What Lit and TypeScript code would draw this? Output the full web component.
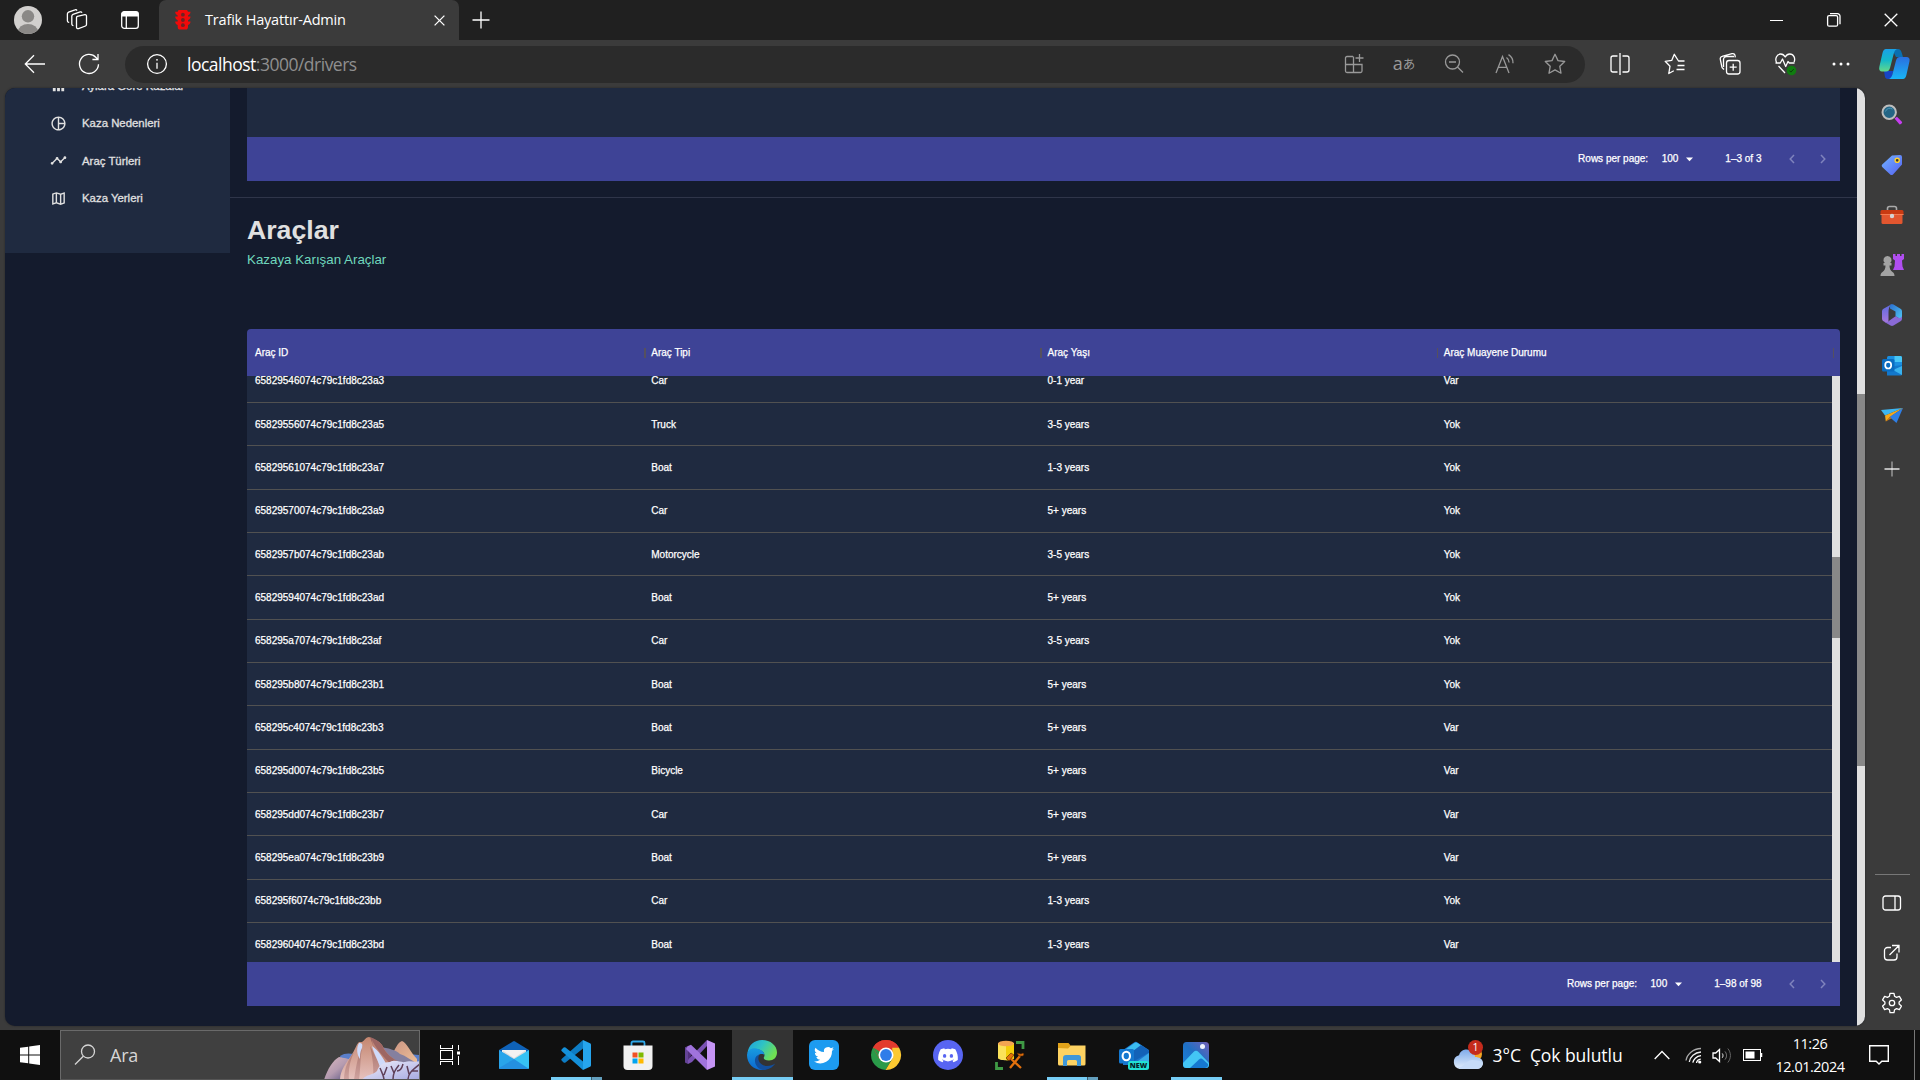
import { LitElement, html, svg, css, TemplateResult } from "lit";
import { customElement, property } from "lit/decorators.js";

/* ---------- shared icon helper ---------- */
const ico = (w: number, h: number, body: unknown, cls = "") =>
  html`<svg class="ico ${cls}" width=${w} height=${h} viewBox="0 0 ${w} ${h}">${body}</svg>`;

/* ---------- title bar and toolbar ---------- */
const avatar = ico(28, 28, svg`
  <clipPath id="av"><circle cx="14" cy="14" r="14"/></clipPath>
  <g clip-path="url(#av)"><rect width="28" height="28" fill="#d2d0ce"/>
  <circle cx="14" cy="10.3" r="6.2" fill="#8a8886"/><ellipse cx="14" cy="25.6" rx="10" ry="7.6" fill="#8a8886"/></g>`);
const workspaces = ico(22, 22, svg`<g class="ln">
  <path d="M11.3 7.4l7.6-1.7a1.3 1.3 0 0 1 1.6 1.3v8.6a1.5 1.5 0 0 1-1 1.4l-7 2.6a1.5 1.5 0 0 1-2-1.4V8.8a1.5 1.5 0 0 1 .8-1.4z"/>
  <path d="M7.4 16.6l-.7-.2a1.6 1.6 0 0 1-.9-1.4V7a2 2 0 0 1 1.2-1.7l7.2-2.4a1.5 1.5 0 0 1 1.8.8"/>
  <path d="M3.2 13.5l-.9-.3a1.6 1.6 0 0 1-.9-1.4V4.9a2 2 0 0 1 1.2-1.7L9 .9a1.5 1.5 0 0 1 2 .7"/></g>`);
const tabActions = ico(18, 18, svg`<rect x=".7" y=".7" width="16.6" height="16.6" rx="2.6" class="ln"/>
  <path d="M.5 5.6V3A2.5 2.5 0 0 1 3 .5h12A2.5 2.5 0 0 1 17.500 3v2.600z" fill="#fff"/><path d="M5.300 5v12.500" class="ln"/>`);
const favicon = ico(16, 20, svg`<path fill="#f00a0a" d="M3.500 0h8.600l.9 1.800h2.500c0 1.900-.9 3.100-2.500 3.600v1.200h2.500c0 1.900-.9 3.100-2.500 3.600v1.300h2.500c0 1.900-.9 3.100-2.500 3.600V17c0 1.600-.9 2.600-2.300 2.600H5C3.600 19.600 2.700 18.600 2.700 17v-1.900C1.100 14.600.2 13.400.2 11.500h2.500v-1.300C1.100 9.700.2 8.500.2 6.600h2.500V5.400C1.100 4.900.2 3.700.2 1.800h2.500z"/>
  <g fill="#6d2323"><circle cx="7.900" cy="4.700" r="1.900"/><circle cx="7.900" cy="10" r="1.900"/><circle cx="7.900" cy="15.200" r="1.900"/></g>`);
const closeTab = ico(11, 11, svg`<path class="ln" d="M.6.6l9.800 9.800M10.400.6L.6 10.400"/>`);
const plus = ico(18, 18, svg`<path class="ln" d="M9 .5v17M.5 9h17"/>`);
const winMin = ico(13, 13, svg`<path class="ln crisp" d="M0 6.500h13"/>`);
const winMax = ico(14, 14, svg`<rect class="ln" x=".6" y="2.600" width="10" height="10.600" rx="1.500"/><path class="ln" d="M3 .7h7.500a2.500 2.500 0 0 1 2.500 2.500v8"/>`);
const winClose = ico(14, 14, svg`<path class="ln" d="M.7.7l12.600 12.600M13.300.7L.7 13.300"/>`);
const back = ico(22, 20, svg`<path class="ln" stroke-width="1.400" d="M21 10H1.500M10 1.300L1.300 10l8.700 8.700"/>`);
const reload = ico(22, 22, svg`<path class="ln" d="M20.500 11.300A9.500 9.500 0 1 1 18 4.500l1.800 1.900M20 1v5.500h-5.600"/>`);
const info = ico(22, 22, svg`<circle class="ln" cx="11" cy="11" r="9.400"/><path class="ln" d="M11 9.700v6"/><circle cx="11" cy="6.800" r=".9" fill="#fff"/>`);

const dim: TemplateResult[] = [
  ico(20, 20, svg`<path class="ln" d="M9 2.500H3A1.500 1.500 0 0 0 1.500 4v13A1.500 1.500 0 0 0 3 18.500h13.500A1.500 1.500 0 0 0 18 17v-6.500H1.500M9.500 2.500v16M15.500 0v8M11.500 4h8"/>`),
  html`<span class="aa">a<i>あ</i></span>`,
  ico(20, 20, svg`<circle class="ln" cx="8.500" cy="8" r="7"/><path class="ln" d="M13.500 13l5.500 5.500M5 8h7"/>`),
  ico(20, 20, svg`<path class="ln" d="M1 19L7.500 2.500 14 19M3.300 13.300h8.400M11.500 3.500c1.700 1.200 2.600 3 2.600 5M13.500.6c3 1.800 4.600 5 4.500 8.600"/>`),
  ico(22, 22, svg`<path class="ln" d="M11 1.300l3 6.300 6.700.9-4.900 4.800 1.200 6.900-6-3.300-6 3.300 1.200-6.900L1.300 8.500 8 7.600z" stroke-linejoin="round"/>`),
];
const bright: TemplateResult[] = [
  ico(20, 22, svg`<path class="ln" d="M7.500 3H3A2 2 0 0 0 1 5v12a2 2 0 0 0 2 2h4.500M12.500 3H17a2 2 0 0 1 2 2v12a2 2 0 0 1-2 2h-4.500M10 0v22"/>`),
  ico(22, 22, svg`<path class="ln" stroke-linejoin="round" d="M20.500 8h-6L10.300 1.300 7.700 7.400l-6.500.9L6 13.200 4.800 20.500l5-2.700M13.500 12.500h7M12.500 16.500h8"/>`),
  ico(22, 24, svg`<rect class="ln" x="7.500" y="8.500" width="13.500" height="13.500" rx="2.500"/><path class="ln" d="M14.200 11.700v7M10.700 15.200h7M5 17.500L3.500 16a3 3 0 0 1-.6-1L1.300 7.300a2.400 2.400 0 0 1 1.800-2.900L13 1.700a2.400 2.400 0 0 1 3 1.700l.3 2M4.500 15V7.500a3 3 0 0 1 3-3H15"/>`),
  ico(24, 24, svg`<path class="ln" stroke-linejoin="round" d="M2.500 10.500C.8 7 2.500 2 6.600 2c2.100 0 3.600 1.200 4.600 3 1-1.800 2.500-3 4.600-3 4 0 5.800 4.400 4.300 8M1.500 11h4.800l2.200-4 3.200 7.500L14 9.500l1.300 1.500h5.200M4.500 14l6.500 7"/><circle cx="17.500" cy="18.500" r="4.800" fill="#107c10"/><path d="M15.400 18.600l1.500 1.500 2.800-3" fill="none" stroke="#0b3d0b"/>`),
  ico(18, 4, svg`<g fill="#fff"><circle cx="2" cy="2" r="1.500"/><circle cx="9" cy="2" r="1.500"/><circle cx="16" cy="2" r="1.500"/></g>`),
];
const copilot = ico(31, 30, svg`
  <defs><linearGradient id="cpa" x1="0" y1="0" x2="0" y2="1"><stop offset="0" stop-color="#1aa0e8"/><stop offset=".5" stop-color="#14b8c9"/><stop offset="1" stop-color="#63d98a"/></linearGradient>
  <linearGradient id="cpb" x1="0" y1="0" x2="0" y2="1"><stop offset="0" stop-color="#2a6fe0"/><stop offset="1" stop-color="#19b5f5"/></linearGradient></defs>
  <path d="M13 0h6c2 0 3 1.500 3.600 3.500L24 8h-7z" fill="#0a6fb0"/>
  <path d="M9 30c-2 0-3-1-3.200-3L5 22h9l-1 8z" fill="#1746c4"/>
  <path d="M7 0h11c-1.800.8-2.600 2.300-3.200 4.500L11 19c-.7 2.400-1.900 3.500-4 3.500H3C.8 22.500-.3 20.800.3 18L3.500 4C4.200 1.300 5.300 0 7 0z" fill="url(#cpa)"/>
  <path d="M24 30H10c1.800-.8 2.800-2.300 3.400-4.500L17 11.500C17.700 9 19 8 21 8h6.500c2.400 0 3.600 1.600 3 4.300L27.400 26C26.700 28.700 25.700 30 24 30z" fill="url(#cpb)"/>`);

/* ---------- side strip ---------- */
const strip: TemplateResult[] = [
  ico(22, 22, svg`<path d="M13.500 14.500l2.500-1.700 4.900 5c1 1-1.400 3.300-2.500 2.400z" fill="#c63df0"/><circle cx="8.200" cy="8.200" r="6.700" fill="#246585" stroke="#bdbdbd" stroke-width="2"/><path d="M4.500 7.500a4.500 4.500 0 0 1 7-2.400" stroke="#4d98b8" fill="none"/>`),
  ico(22, 22, svg`<defs><linearGradient id="tg" x1="0" y1="0" x2="1" y2="1"><stop offset="0" stop-color="#72b5ff"/><stop offset="1" stop-color="#5560f2"/></linearGradient></defs><path d="M11 1.500L19 1a2 2 0 0 1 2 2v7.500L12 20.400a2 2 0 0 1-2.800 0L1.200 13a2 2 0 0 1 0-2.600z" fill="url(#tg)"/><circle cx="16.200" cy="6.300" r="2.100" fill="#3a3a2c" stroke="#ffd02f" stroke-width="1.400"/>`),
  ico(24, 20, svg`<path d="M7.500 5V3.500a2 2 0 0 1 2-2h5a2 2 0 0 1 2 2V5" stroke="#aaa" stroke-width="1.600" fill="none"/><rect x="1.500" y="8" width="21" height="11" rx="1.500" fill="#e2562f"/><path d="M2 5h20a1.500 1.500 0 0 1 1.500 1.500V10H.5V6.500A1.500 1.500 0 0 1 2 5z" fill="#c93a12"/><path d="M.5 9.500h23" stroke="#f47b50"/><circle cx="12" cy="11" r="2.200" fill="#d4d4d4"/>`),
  ico(24, 24, svg`<path d="M13 1h2.500v2H17V1h3v2h1.500V1H24v5l-2 1.500.5 6 1.500 3.500H13l1.500-3.500.5-6L13 6z" fill="#b04ef0"/><path d="M7.500 3a4 4 0 0 1 2.700 7h1.300v2.500h-2c0 3 .8 5 3 6.500 1.500 1 2 2 2 4H.5c0-2 .5-3 2-4 2.200-1.500 3-3.500 3-6.500h-2V10h1.300A4 4 0 0 1 7.500 3z" fill="#a3a3a3"/>`),
  ico(22, 24, svg`<defs><linearGradient id="m1" x1="0" y1="0" x2="0" y2="1"><stop offset="0" stop-color="#5a6be0"/><stop offset="1" stop-color="#a877dc"/></linearGradient><linearGradient id="m2" x1="0" y1="0" x2="1" y2="1"><stop offset="0" stop-color="#2b6fd0"/><stop offset="1" stop-color="#4fc6f2"/></linearGradient></defs>
   <path d="M11 1L2.500 5.700A3 3 0 0 0 1 8.300v7.400a3 3 0 0 0 1.500 2.600L5 19.500c2 .5 2.500-.5 2.500-2V9.500C7.500 6 8 3 11 1z" fill="url(#m1)"/><path d="M9.500 1.600c1-.6 2-.6 3 0l7 4.100A3 3 0 0 1 21 8.300v6c0 1.500-1 2-2.500 1.200l-4-2.300V8.600L9 5.500c0-2 0-3.100.5-3.900z" fill="url(#m2)"/><path d="M21 13v2.700a3 3 0 0 1-1.500 2.600l-7 4.200c-1 .6-2 .6-3 0L3.500 19c2.500.4 4-.7 5-1.600L14.500 13.200l3 1.500c1.500.6 3 0 3.500-1.700z" fill="#8a6ad6"/>`),
  ico(22, 22, svg`<rect x="6" y="1" width="15" height="18" rx="1.500" fill="#1b8fe0"/><path d="M13.500 1H19.500A1.500 1.500 0 0 1 21 2.500V7h-7.500z" fill="#47c6f5"/><path d="M6 12l15-2v9a1.500 1.500 0 0 1-1.500 1.500H6z" fill="#1378cc"/><path d="M21 11v9L12 15z" fill="#39b3ef"/><rect x="1" y="4" width="12.500" height="12.500" rx="1.500" fill="#0a6cc0"/><ellipse cx="7.200" cy="10.200" rx="3" ry="3.300" fill="none" stroke="#fff" stroke-width="1.700"/>`),
  ico(24, 18, svg`<path d="M1 3l22-2L5 8.500z" fill="#3db6f2"/><path d="M23 1L5 8.500l.8 6L10 10z" fill="#f5a81c"/><path d="M23 1L9.500 10l7 6z" fill="#2f7fe6"/><path d="M5.800 14.500L10 10l1.500 1.300z" fill="#d7780a"/>`),
  ico(16, 16, svg`<path d="M8 .5v15" stroke="#999" stroke-width="1.500"/><path d="M.5 8h15" class="ln"/>`),
];
const stripLow: TemplateResult[] = [
  ico(20, 16, svg`<rect class="ln" x="1" y="1" width="17.500" height="14" rx="2.500"/><path class="ln" d="M13 1v14"/>`),
  ico(18, 18, svg`<path class="ln" d="M8 3.500H4.500A3 3 0 0 0 1.500 6.500V13a3 3 0 0 0 3 3H11a3 3 0 0 0 3-3V9.500M9 1.500h7V8.500M16 1.500L6.500 11"/>`),
  ico(22, 22, svg`<path class="ln" stroke-linejoin="round" d="M9 1.300h4l.6 3 1.900 1.100 2.900-1 2 3.500-2.300 2v2.200l2.300 2-2 3.500-2.900-1-1.900 1.100-.6 3H9l-.6-3-1.900-1.100-2.900 1-2-3.500 2.300-2V9.900l-2.300-2 2-3.500 2.900 1 1.900-1.100z"/><circle class="ln" cx="11" cy="11" r="2.700"/>`),
];

/* ---------- sidebar icons (24-unit grid) ---------- */
const mi = (d: string) => html`<svg class="mi" width="17" height="17" viewBox="0 0 24 24"><path d=${d}/></svg>`;
const menu = [
  { t: "Aylara Göre Kazalar", i: mi("M4 9h4v11H4zM10 4h4v16h-4zM16 13h4v7h-4z") },
  { t: "Kaza Nedenleri", i: mi("M12 2C6.480 2 2 6.480 2 12s4.480 10 10 10 10-4.480 10-10S17.520 2 12 2zm1 2.070c3.610.45 6.480 3.330 6.930 6.930H13V4.070zM4 12c0-4.060 3.070-7.440 7-7.930v15.870c-3.930-.5-7-3.880-7-7.940zm9 7.930V13h6.930c-.45 3.610-3.320 6.480-6.930 6.930z") },
  { t: "Araç Türleri", i: mi("M23 8c0 1.100-.9 2-2 2-.18 0-.35-.02-.51-.07l-3.560 3.550c.05.16.07.34.07.52 0 1.100-.9 2-2 2s-2-.9-2-2c0-.18.02-.36.07-.52l-2.550-2.550c-.16.05-.34.07-.52.07s-.36-.02-.52-.07l-4.550 4.560c.05.16.07.33.07.51 0 1.100-.9 2-2 2s-2-.9-2-2 .9-2 2-2c.18 0 .35.02.51.07l4.560-4.550C8.020 9.360 8 9.180 8 9c0-1.100.9-2 2-2s2 .9 2 2c0 .18-.02.36-.07.52l2.550 2.550c.16-.05.34-.07.52-.07s.36.02.52.07l3.550-3.560C19.020 8.350 19 8.180 19 8c0-1.100.9-2 2-2s2 .9 2 2z") },
  { t: "Kaza Yerleri", i: mi("M20.500 3l-.16.03L15 5.100 9 3 3.360 4.900c-.21.07-.36.25-.36.48V20.500c0 .28.22.5.5.5l.16-.03L9 18.900l6 2.100 5.640-1.900c.21-.07.36-.25.36-.48V3.500c0-.28-.22-.5-.5-.5zM10 5.470l4 1.400v11.660l-4-1.400V5.470zm-5 .99l3-1.010v11.700l-3 1.160V6.460zm14 11.080l-3 1.010V6.860l3-1.160v11.840z") },
];

/* ---------- taskbar icons ---------- */
const startLogo = ico(20, 20, svg`<path fill="#fff" d="M0 2.800L8.200 1.700v7.800H0zM9.200 1.500L20 0v9.500H9.200zM0 10.500h8.200v7.800L0 17.200zM9.200 10.500H20V20L9.200 18.500z"/>`);
const searchGlass = ico(22, 22, svg`<circle class="ln" stroke-width="1.600" cx="14" cy="7.500" r="6.500"/><path class="ln" stroke-width="1.600" d="M9.300 12.200L1 20.500"/>`);
const mountains = ico(96, 43, svg`
  <defs><linearGradient id="mt" x1="0" y1="0" x2="0" y2="1"><stop offset="0" stop-color="#c4866f"/><stop offset="1" stop-color="#e6c2bf"/></linearGradient>
  <linearGradient id="mv" x1="0" y1="0" x2="0" y2="1"><stop offset="0" stop-color="#a87066"/><stop offset="1" stop-color="#cfa3a0"/></linearGradient>
  <linearGradient id="ml" x1="0" y1="0" x2="1" y2="1"><stop offset="0" stop-color="#dcb9c0"/><stop offset=".5" stop-color="#b59bb0"/><stop offset="1" stop-color="#4d4a7c"/></linearGradient>
  <linearGradient id="mr" x1="0" y1="0" x2="1" y2="1"><stop offset="0" stop-color="#c79282"/><stop offset="1" stop-color="#f3c49a"/></linearGradient>
  <linearGradient id="ms" x1="0" y1="0" x2="1" y2="1"><stop offset="0" stop-color="#f1f1fd"/><stop offset="1" stop-color="#a6a9e0"/></linearGradient></defs>
  <path d="M16 19c4-3 9-3 14-2v14H20zM74 17h10l12 1v14H74z" fill="#5b7fcb"/>
  <path d="M0 43c3-10 9-20 15-23 5 1 9 1 13 4l-5 19z" fill="url(#ml)"/>
  <path d="M68 18c3-6 6-13 10-14 5 2 9 12 15 18v10H66z" fill="url(#mr)"/>
  <path d="M56 10c8 1 16 3 20 7 6 2 11 6 16 9v8H56z" fill="#85809f"/>
  <path d="M16 43c0-9 6-17 11-24 4-6 5-11 8-14h3c3-2 4-5 7-5 5 2 10 4 13 8 4 9 9 12 20 20l-10 15z" fill="url(#mt)"/>
  <path d="M46 0c5 2 9 4 12 8 4 9 10 13 20 19l-11 1C56 22 49 11 46 0z" fill="#9d6663"/>
  <path d="M48 3c3 7 10 16 20 25l-4 1C55 22 49 13 48 3z" fill="#c08677"/>
  <path d="M30 15c-4 9-6 18-5 28h-5c0-11 4-20 10-28zM39 7c-3 9-2 22-4 36h-5c2-13 4-26 9-36zM46 9c5 9 9 18 12 23l-9 7c1-10-1-21-3-30z" fill="url(#mv)"/>
  <path d="M35 6c3 0 4 1 3 5-2 4-2 7-2 11-3-4-4-11-1-16zM48 9c7 5 11 12 15 19l-6 5C54 23 50 17 48 9z" fill="#cfdafa"/>
  <path d="M38 43c4-6 10-4 15-9 2-6 7-9 13-9 6-3 11 1 15 0 5-2 10 1 15-1v19z" fill="url(#ms)"/>
  <path d="M60 43c0-4-2-7-4-12M60 38l3-8M69 43c0-7 2-10 6-15M70 36l-3-7M73 34c3 0 5-3 6-7M84 43c0-6 3-9 12-16M85 37l-2-8M88 34h6" stroke="#5f4059" stroke-width="1.500" fill="none"/>`);
const taskView = ico(21, 20, svg`<g class="crisp" fill="none" stroke="#fff"><path d="M.5 0v3.500h12V0M.5 20v-3.500h12V20"/><rect x=".5" y="5.500" width="12" height="8.500"/><path d="M18.500 0v5M18.500 11v9"/></g><rect x="17" y="6.500" width="3" height="3" fill="#fff"/>`);

interface App { i: TemplateResult; active?: boolean; bar?: "full" | "split" | "wide" }
const apps: App[] = [
  { i: ico(30, 30, svg`<path d="M0 10L14 1.400a2 2 0 0 1 2 0L30 10v8H0z" fill="#0f62b8"/><path d="M3 10h24v12H3z" fill="#f2f2f2"/><path d="M3 10l12 8 12-8v4l-9 6H9z" fill="#dcdcdc"/><path d="M0 10l15 9v10H1a1 1 0 0 1-1-1z" fill="#29a4ea"/><path d="M30 10v18a1 1 0 0 1-1 1H1L15 19z" fill="#36c2f3"/><path d="M0 28l15-9 15 10H1z" fill="#2490e0"/>`) },
  { bar: "split", i: ico(30, 30, svg`<path d="M22 0l7 3.300a1.500 1.500 0 0 1 1 1.400V25.300a1.500 1.500 0 0 1-1 1.400L22 30z" fill="#26a5ee"/><path d="M22 0v8.500L4.500 22.400a1.500 1.500 0 0 1-1.900 0L.8 20.800a1.300 1.300 0 0 1 0-2z" fill="#0d7cc4"/><path d="M22 30v-8.500L4.500 7.600a1.500 1.500 0 0 0-1.900 0L.8 9.200a1.300 1.300 0 0 0 0 2z" fill="#1490da"/>`) },
  { i: ico(30, 30, svg`<path d="M8.500 8V3a1.500 1.500 0 0 1 1.500-1.500h10A1.500 1.500 0 0 1 21.500 3v5" fill="none" stroke="#2fa8e8" stroke-width="1.800"/><path d="M.5 5.500h29V26a4 4 0 0 1-4 4h-21a4 4 0 0 1-4-4z" fill="#f1f1f1"/><path d="M9.500 12.500h5v5h-5z" fill="#f25022"/><path d="M15.500 12.500h5v5h-5z" fill="#7fba00"/><path d="M9.500 18.500h5v5h-5z" fill="#00a4ef"/><path d="M15.500 18.500h5v5h-5z" fill="#ffb900"/>`) },
  { i: ico(30, 30, svg`<path d="M0 7.500l3-1.300 6 4.800-6 9.500V9.500L0 22.500z" fill="#52307c"/><path d="M0 7.500l3-1.500v18l-3-1.500z" fill="#644396"/><path d="M3 24l4-2L22 6V0L3 19.500z" fill="#7a52b3"/><path d="M3 6l3-1.300L22 20v10L1 9z" fill="#a073dc"/><path d="M22 0l8 3.500v23L22 30z" fill="#c594f5"/>`) },
  { active: true, bar: "full", i: ico(30, 30, svg`<defs><linearGradient id="ed" x1="0" y1="0" x2="1" y2=".5"><stop offset="0" stop-color="#1c9fe0"/><stop offset=".5" stop-color="#2fc3c4"/><stop offset="1" stop-color="#6fe052"/></linearGradient><linearGradient id="ee" x1="0" y1="0" x2="0" y2="1"><stop offset="0" stop-color="#189bdf"/><stop offset="1" stop-color="#0c68d0"/></linearGradient></defs>
    <path d="M.5 13C1.500 5 7.500 0 15 0c8.500 0 15 5.500 15 12.500 0 5-3.500 8-8 8-4 0-6-1.500-5-3.500 1-1.600.5-4-1.500-5.500C11 8 4 9 .5 13z" fill="url(#ed)"/><path d="M15 30C6.500 30 0 23.500 0 15 .5 9.500 5 7.500 9.500 8.500c4 .6 7.500 3 7.800 6C11 12 8.500 18 11 22.500c2 4 6 6 8.500 6.500-1.500.7-3 1-4.500 1z" fill="url(#ee)"/><path d="M12.500 14.500C9 20 14 26 20 26c3.500 0 6-1.300 8.200-2.500C25.500 27.700 21 30 16 30 10.500 29 7.500 24 8 19.500c.3-2.500 2-4.500 4.500-5z" fill="#124f9d"/>`) },
  { i: ico(30, 30, svg`<rect width="30" height="30" rx="6" fill="#1d9bf0"/><path d="M25 8.800a8 8 0 0 1-2.300.6 4 4 0 0 0 1.800-2.200 8 8 0 0 1-2.600 1A4.100 4.100 0 0 0 15 12a11.700 11.700 0 0 1-8.500-4.300 4.100 4.100 0 0 0 1.300 5.500 4 4 0 0 1-1.900-.5c0 2 1.400 3.700 3.300 4.100a4 4 0 0 1-1.900.1c.5 1.600 2 2.800 3.900 2.800A8.300 8.300 0 0 1 5 21.400 11.700 11.700 0 0 0 23 11z" fill="#fff"/>`) },
  { i: ico(30, 30, svg`<path d="M15 15L2 7.500A15 15 0 0 1 28 7.500z" fill="#e33b2e"/><path d="M2 7.500A15 15 0 0 0 14.500 30l7-11.500L15 15z" fill="#2a9a49"/><path d="M28 7.500A15 15 0 0 1 14.500 30L21.500 18.500 21.200 7.500z" fill="#fcc931"/><path d="M2 7.500A15 15 0 0 1 28 7.500H15l-7 11z" fill="#e33b2e"/><path d="M2 7.500L8.500 18.700 15 15z" fill="#2a9a49"/><circle cx="15" cy="15" r="7.500" fill="#fff"/><circle cx="15" cy="15" r="5.900" fill="#2f7de9"/>`) },
  { i: ico(30, 30, svg`<circle cx="15" cy="15" r="15" fill="#5865f2"/><path d="M22.300 9.300a14 14 0 0 0-3.600-1.100l-.5 1a13 13 0 0 0-6.400 0l-.5-1a14 14 0 0 0-3.600 1.100C5.500 13 4.900 16.600 5.200 20a14 14 0 0 0 4.400 2.200l1-1.600-1.500-.7.4-.3a10 10 0 0 0 11 0l.4.3-1.500.7 1 1.600a14 14 0 0 0 4.400-2.200c.4-4-.6-7.500-2.500-10.700z" fill="#fff"/><ellipse cx="11.600" cy="15.900" rx="1.700" ry="1.900" fill="#5865f2"/><ellipse cx="18.400" cy="15.900" rx="1.700" ry="1.900" fill="#5865f2"/>`) },
  { i: ico(30, 30, svg`<path d="M3 3v15c0 3 16 3 16 0V3z" fill="#fbe25a"/><path d="M11 4h8v14c0 1.500-4 2.200-8 2.200z" fill="#f3cd0a"/><ellipse cx="11" cy="3.500" rx="8" ry="2.800" fill="#f3a552"/><path d="M21 2.500h7V9M1.500 22v6.500H8" fill="none" stroke="#3f9a45" stroke-width="2.800"/><path d="M15 28l10-12M14 17l12 11" stroke="#e2700c" stroke-width="2.300"/><path d="M11 18l5-5 3 2-5 6zM22 13l2 3 4 0 1-2-1-1-2 1z" fill="#e2700c" stroke="#502400" stroke-width=".6"/>`) },
  { bar: "split", i: ico(30, 30, svg`<path d="M1 3h10.500l2.500 3H28v8H1z" fill="#e0a21a"/><path d="M1 8l10 .500 3-3h14.500V24a1.500 1.500 0 0 1-1.500 1.500H2.500A1.500 1.500 0 0 1 1 24z" fill="#fdd262"/><path d="M6 26v-8a3 3 0 0 1 3-3h12.500a2.500 2.500 0 0 1 2.500 2.500V26h-4v-4.500a1.500 1.500 0 0 0-1.500-1.500h-7a1.500 1.500 0 0 0-1.500 1.500V26z" fill="#3f97d8"/>`) },
  { i: ico(30, 30, svg`<path d="M4 10L15 2.500a3 3 0 0 1 3.500 0L30 10v15H4z" fill="#1b74cc"/><path d="M7 9l8.500-6a3 3 0 0 1 3 0L23 6 8 15z" fill="#3bbcf0"/><path d="M22 5l8 5.500v2L10 24V14z" fill="#1362b8"/><path d="M30 13v13H12z" fill="#39a9e8"/><rect x="0" y="9" width="15" height="14.500" rx="1.500" fill="#1478d0"/><ellipse cx="7.300" cy="16" rx="3.700" ry="4.200" fill="none" stroke="#fff" stroke-width="2.100"/><rect x="9" y="21" width="21" height="9" rx="2.500" fill="#22e0d4"/><text x="19.500" y="28.300" text-anchor="middle" class="new">NEW</text>`) },
  { bar: "wide", i: ico(30, 30, svg`<defs><linearGradient id="ph" x1="0" y1="1" x2="1" y2="0"><stop offset="0" stop-color="#1a82dc"/><stop offset=".5" stop-color="#1f70c4"/><stop offset="1" stop-color="#7360b8"/></linearGradient></defs><rect x="2" y="2" width="26" height="26" rx="3.500" fill="url(#ph)"/><path d="M2 23L12.500 12a3.500 3.500 0 0 1 5 0L28 23v1.500a3.500 3.500 0 0 1-3.500 3.500h-19A3.500 3.500 0 0 1 2 24.500z" fill="#43c6f5"/><path d="M9 28l9-8.500a3 3 0 0 1 4 0l5 4.500a3.500 3.500 0 0 1-3 4z" fill="#1678d0"/><circle cx="21.500" cy="6.500" r="2.500" fill="#f0f4ff"/>`) },
];
const weather = ico(30, 30, svg`<defs><linearGradient id="cl" x1="0" y1="0" x2="0" y2="1"><stop offset="0" stop-color="#7fabea"/><stop offset="1" stop-color="#e3eefc"/></linearGradient></defs><circle cx="22" cy="14" r="7" fill="#f5a623"/><path d="M7 29a7 7 0 0 1-1-13.700A8 8 0 0 1 20 12.500c1.500 1.500 2 3 2 4.500 4 0 8 2 8 6a6 6 0 0 1-6 6z" fill="url(#cl)"/><path d="M4 27c6 2 8-6 15-7 5 0 9 1 11 3a6 6 0 0 1-6 6H7z" fill="#c6dbf8"/>`);
const trayUp = ico(16, 10, svg`<path class="ln" stroke-width="1.500" d="M.7 9L8 1.500 15.300 9"/>`);
const wifi = ico(17, 17, svg`<g fill="none" stroke-width="1.300"><path d="M1 13.500C2 7 8 1.700 16 1.500" stroke="#aaa"/><path d="M4.300 15C5 10 9.500 5.500 16 5" stroke="#eee"/><path d="M7.800 15.700C8.300 12.500 11.300 9.200 16 8.700M11.500 16c.3-1.700 2-3.600 4.300-3.800" stroke="#fff"/></g><circle cx="14.700" cy="15" r="1.600" fill="#fff"/>`);
const sound = ico(21, 17, svg`<path class="ln" d="M1 6h2.700L7.500 2.500v12L3.700 11H1z"/><path d="M10.300 6.500c.9 1.200.9 3 0 4.200" stroke="#fff" fill="none"/><path d="M13 4.500c2 2.500 2 5.600 0 8" stroke="#888" fill="none"/><path d="M15.800 1.500c3.500 4 3.500 10 0 14" stroke="#666" fill="none"/>`);
const battery = ico(20, 12, svg`<rect class="ln crisp" x=".7" y=".7" width="16.600" height="10.600"/><rect x="2.500" y="2.500" width="9" height="7" fill="#fff"/><path d="M18.500 4v4" stroke="#fff" stroke-width="1.500"/>`);
const notif = ico(20, 20, svg`<path d="M.7.7h18.600v15.600h-6.500L10 19l-2.800-2.700H.7z" fill="none" stroke="#fff" stroke-width="1.400"/>`);

/* ---------- grid data ---------- */
const vehicles: [string, string, string, string][] = [
  ["65829546074c79c1fd8c23a3", "Car", "0-1 year", "Var"],
  ["65829556074c79c1fd8c23a5", "Truck", "3-5 years", "Yok"],
  ["65829561074c79c1fd8c23a7", "Boat", "1-3 years", "Yok"],
  ["65829570074c79c1fd8c23a9", "Car", "5+ years", "Yok"],
  ["6582957b074c79c1fd8c23ab", "Motorcycle", "3-5 years", "Yok"],
  ["65829594074c79c1fd8c23ad", "Boat", "5+ years", "Yok"],
  ["658295a7074c79c1fd8c23af", "Car", "3-5 years", "Yok"],
  ["658295b8074c79c1fd8c23b1", "Boat", "5+ years", "Yok"],
  ["658295c4074c79c1fd8c23b3", "Boat", "5+ years", "Var"],
  ["658295d0074c79c1fd8c23b5", "Bicycle", "5+ years", "Var"],
  ["658295dd074c79c1fd8c23b7", "Car", "5+ years", "Var"],
  ["658295ea074c79c1fd8c23b9", "Boat", "5+ years", "Var"],
  ["658295f6074c79c1fd8c23bb", "Car", "1-3 years", "Yok"],
  ["65829604074c79c1fd8c23bd", "Boat", "1-3 years", "Var"],
];
const headers = ["Araç ID", "Araç Tipi", "Araç Yaşı", "Araç Muayene Durumu"];

@customElement("grid-footer")
class GridFooter extends LitElement {
  @property() range = "";
  static styles = css`
    :host { display: flex; height: 44px; flex: none; background: #3e4396; color: #fff; align-items: center; justify-content: flex-end; font: 10px "Liberation Sans", sans-serif; padding-right: 14px; -webkit-text-stroke: .25px #fff; }
    .t { margin-top: -1px; }
    .size { display: flex; align-items: center; margin: -2px 31px 0 13.500px; }
    .size svg { margin: 2px 0 0 7px; }
    .nav { display: flex; gap: 25px; margin-left: 27.500px; margin-top: -1px; }
    .nav path { fill: none; stroke: #7f83bd; stroke-width: 1.500; }
  `;
  render() {
    return html`<span class="t">Rows per page:</span>
      <span class="size">100<svg width="9" height="5" viewBox="0 0 9 5"><path d="M1 .5h7L4.500 4.200z" fill="#fff"/></svg></span>
      <span class="t">${this.range}</span>
      <span class="nav"><svg width="6" height="10" viewBox="0 0 6 10"><path d="M5 1L1.200 5 5 9"/></svg><svg width="6" height="10" viewBox="0 0 6 10"><path d="M1 1l3.800 4L1 9"/></svg></span>`;
  }
}

@customElement("vehicle-grid")
class VehicleGrid extends LitElement {
  static styles = css`
    :host { display: flex; flex-direction: column; height: 677px; border-radius: 4px 4px 0 0; overflow: hidden; font: 10px "Liberation Sans", sans-serif; color: #fff; -webkit-text-stroke: .25px #fff; }
    .row, .head { display: grid; grid-template-columns: repeat(4, 396.250px); }
    .head { height: 47px; flex: none; background: #3e4396; align-items: center; }
    .head span { display: flex; align-items: center; justify-content: space-between; padding: 0 0 1px 8px; width: 390.500px; }
    .head span::after { content: ""; width: 1.500px; height: 10px; margin-top: 2px; background: #55505f; }
    .body { flex: 1; display: flex; min-height: 0; background: #1f2a40; }
    .rows { flex: 1; overflow: hidden; }
    .rows::before { content: ""; display: block; margin-top: -16.330px; }
    .row { height: 43.333px; box-sizing: border-box; border-bottom: 1px solid #515151; align-items: center; }
    .row span { padding-left: 8px; }
    .track { width: 8px; background: #e0e0e0; padding-top: 181px; box-sizing: border-box; }
    .thumb { height: 81px; background: #888; }
  `;
  render() {
    return html`<div class="head">${headers.map((h) => html`<span>${h}</span>`)}</div>
      <div class="body"><div class="rows">${vehicles.map((r) => html`<div class="row">${r.map((c) => html`<span>${c}</span>`)}</div>`)}</div>
      <div class="track"><div class="thumb"></div></div></div>
      <grid-footer range="1–98 of 98"></grid-footer>`;
  }
}

@customElement("app-root")
class AppRoot extends LitElement {
  static styles = css`
    :host { display: flex; flex-direction: column; width: 1920px; height: 1080px; overflow: hidden; background: #3b3b3b; color: #fff; font-family: "Open Sans", "Noto Sans", sans-serif; }
    .ico { display: block; flex: none; overflow: visible; }
    .ln { fill: none; stroke: currentColor; stroke-width: 1.300; }
    .crisp { shape-rendering: crispEdges; }
    .cell { display: flex; align-items: center; justify-content: center; flex: none; box-sizing: border-box; }
    .grow { flex: 1; }

    .tabs { display: flex; height: 40px; flex: none; background: #202020; }
    .c-av { width: 56px; } .c-ws { width: 42px; } .c-ta { width: 61px; padding-left: 2px; }
    .tab { width: 300px; box-sizing: border-box; background: #3b3b3b; border-radius: 7px 7px 0 0; display: flex; align-items: center; padding: 0 14.500px 0 16px; }
    .tab .name { font-size: 14.500px; letter-spacing: -.18px; margin: -1px 0 0 14px; flex: 1; white-space: nowrap; }
    .c-plus { width: 43px; }
    .c-win { width: 57px; } .c-win:last-child { width: 58px; }

    .bar { display: flex; height: 48px; flex: none; align-items: center; }
    .c-back { width: 53px; padding-left: 16px; } .c-rel { width: 72px; }
    .omni { width: 1460px; height: 37px; border-radius: 19px; background: #2b2b2b; display: flex; align-items: center; }
    .omni .cell { color: #999; width: 50.300px; }
    .omni .c-info { width: 54px; padding-left: 10px; color: #fff; }
    .url { font-size: 17.500px; margin: -1px 0 0 8px; letter-spacing: -.5px; flex: 1; color: #8f8f8f; white-space: nowrap; }
    .url b { font-weight: 400; color: #fff; }
    .tail { width: 5px; }
    .aa { font: 18px "Open Sans", "Noto Sans CJK JP", sans-serif; display: flex; align-items: center; height: 20px; margin-top: -3px; }
    .aa i { font: 12.500px "Noto Sans CJK JP", sans-serif; padding-top: 2px; }
    .tools { display: flex; padding-left: 7.500px; }
    .tools .cell { width: 55.200px; }
    .c-cop { width: 51.500px; }

    .mid { display: flex; height: 942px; flex: none; padding-left: 5px; box-sizing: border-box; }
    .page { display: flex; width: 1860px; height: 938px; border-radius: 10px; overflow: hidden; background: #141b2d; font-family: "Liberation Sans", sans-serif; box-shadow: 0 0 2px #222; }
    .side { width: 225px; height: 165px; background: #1f2a40; overflow: hidden; flex: none; }
    .side ul { list-style: none; margin: -21px 0 0; padding: 0; }
    .side li { height: 37.500px; display: flex; align-items: center; gap: 15px; padding-left: 45px; font-size: 11.400px; color: #e0e0e0; -webkit-text-stroke: .3px #e0e0e0; }
    .mi { fill: #e0e0e0; }
    .content { width: 1627px; display: flex; flex-direction: column; }
    .prev { margin: 0 17px 0 17px; padding-top: 49px; background: #1f2a40; flex: none; }
    .rule { height: 1px; background: #2f3549; margin-top: 16px; flex: none; }
    .block { padding: 17px 17px 0; }
    h2 { margin: 0; font-size: 26.670px; line-height: 30px; color: #e0e0e0; }
    .sub { margin: 6px 0 60px; font-size: 13.330px; line-height: 18px; color: #70d8bd; }
    .vscroll { width: 8px; background: #e0e0e0; padding-top: 306px; box-sizing: border-box; }
    .vthumb { height: 372px; background: #888; }

    .strip { width: 54px; display: flex; flex-direction: column; align-items: center; padding-top: 1.500px; box-sizing: border-box; }
    .strip .cell { height: 50.200px; width: 54px; }
    .strip .cell.add { height: 57px; }
    .strip hr { width: 35px; border: 0; height: 1px; background: #777; margin: 0 0 3px; }
    .strip .low { height: 50px; }
    .low:last-child { margin-bottom: 2.500px; }

    .task { display: flex; height: 50px; flex: none; background: #101010; }
    .c-start { width: 60px; }
    .find { width: 360px; box-sizing: border-box; border: 1px solid #6a6a6a; border-bottom-color: #555; background: #404040; display: flex; align-items: center; padding-left: 13px; font-size: 18px; color: #d6d6d6; overflow: hidden; }
    .find span { flex: 1; margin-left: 14px; letter-spacing: -.2px; }
    .find .ico:last-child { margin: 6px -1px 0 0; }
    .c-tv { width: 63px; padding-right: 2px; }
    .app { width: 62px; height: 50px; display: flex; flex-direction: column; align-items: center; box-sizing: border-box; padding-top: 10px; gap: 7px; }
    .app.active { background: linear-gradient(#333, #333) no-repeat 1px 0 / 61px 50px; }
    .u { height: 3px; flex: none; background: #76cdf5; }
    .u.full { width: 61px; } .u.wide { width: 51px; }
    .u.split { width: 51px; background: linear-gradient(90deg, #76cdf5 40px, #3c5a68 40px, #3c5a68 41px, #639fbd 41px); }
    .new { font: 800 7.200px "Open Sans", sans-serif; fill: #06232a; }
    .wx { display: flex; align-items: center; font-size: 17.500px; letter-spacing: -.05px; width: 201px; white-space: nowrap; }
    .wi { position: relative; margin-right: 9.500px; }
    .badge { position: absolute; left: 15px; top: 0; width: 15px; height: 15px; border-radius: 50%; background: #c42b1c; font-size: 10.500px; line-height: 15px; text-align: center; letter-spacing: 0; }
    .wx .d { margin-left: 9px; }
    .tray { display: flex; align-items: center; gap: 10px; }
    .tray .ico:first-child { margin-right: 5px; }
    .clock { width: 72px; margin-left: 11px; padding-top: 1.500px; text-align: center; font-size: 14.500px; line-height: 23.300px; letter-spacing: -.5px; white-space: nowrap; }
    .c-not { width: 68px; padding-right: 2px; }
    .peek { width: 5px; border-left: 1px solid #777; }
  `;
  render() {
    return html`
      <div class="tabs">
        <div class="cell c-av">${avatar}</div><div class="cell c-ws">${workspaces}</div><div class="cell c-ta">${tabActions}</div>
        <div class="tab">${favicon}<span class="name">Trafik Hayattır-Admin</span>${closeTab}</div>
        <div class="cell c-plus">${plus}</div><div class="grow"></div>
        <div class="cell c-win">${winMin}</div><div class="cell c-win">${winMax}</div><div class="cell c-win">${winClose}</div>
      </div>
      <div class="bar">
        <div class="cell c-back">${back}</div><div class="cell c-rel">${reload}</div>
        <div class="omni"><div class="cell c-info">${info}</div><span class="url"><b>localhost</b>:3000/drivers</span>
          ${dim.map((i) => html`<div class="cell">${i}</div>`)}<div class="tail"></div></div>
        <div class="tools">${bright.map((i) => html`<div class="cell">${i}</div>`)}</div>
        <div class="cell c-cop">${copilot}</div>
      </div>
      <div class="mid">
        <div class="page">
          <div class="side"><ul>${menu.map((m) => html`<li>${m.i}<span>${m.t}</span></li>`)}</ul></div>
          <div class="content">
            <div class="prev"><grid-footer range="1–3 of 3"></grid-footer></div>
            <div class="rule"></div>
            <div class="block"><h2>Araçlar</h2><div class="sub">Kazaya Karışan Araçlar</div><vehicle-grid></vehicle-grid></div>
          </div>
          <div class="vscroll"><div class="vthumb"></div></div>
        </div>
        <div class="strip">
          ${strip.map((i, n) => html`<div class="cell ${n === 7 ? "add" : ""}">${i}</div>`)}
          <div class="grow"></div><hr />
          ${stripLow.map((i) => html`<div class="cell low">${i}</div>`)}
        </div>
      </div>
      <div class="task">
        <div class="cell c-start">${startLogo}</div>
        <div class="find">${searchGlass}<span>Ara</span>${mountains}</div>
        <div class="cell c-tv">${taskView}</div>
        ${apps.map((a) => html`<div class="app ${a.active ? "active" : ""}">${a.i}${a.bar ? html`<div class="u ${a.bar}"></div>` : ""}</div>`)}
        <div class="grow"></div>
        <div class="wx"><span class="wi">${weather}<span class="badge">1</span></span><span>3°C</span><span class="d">Çok bulutlu</span></div>
        <div class="tray">${trayUp}${wifi}${sound}${battery}</div>
        <div class="clock">11:26<br />12.01.2024</div>
        <div class="cell c-not">${notif}</div><div class="peek"></div>
      </div>`;
  }
}
